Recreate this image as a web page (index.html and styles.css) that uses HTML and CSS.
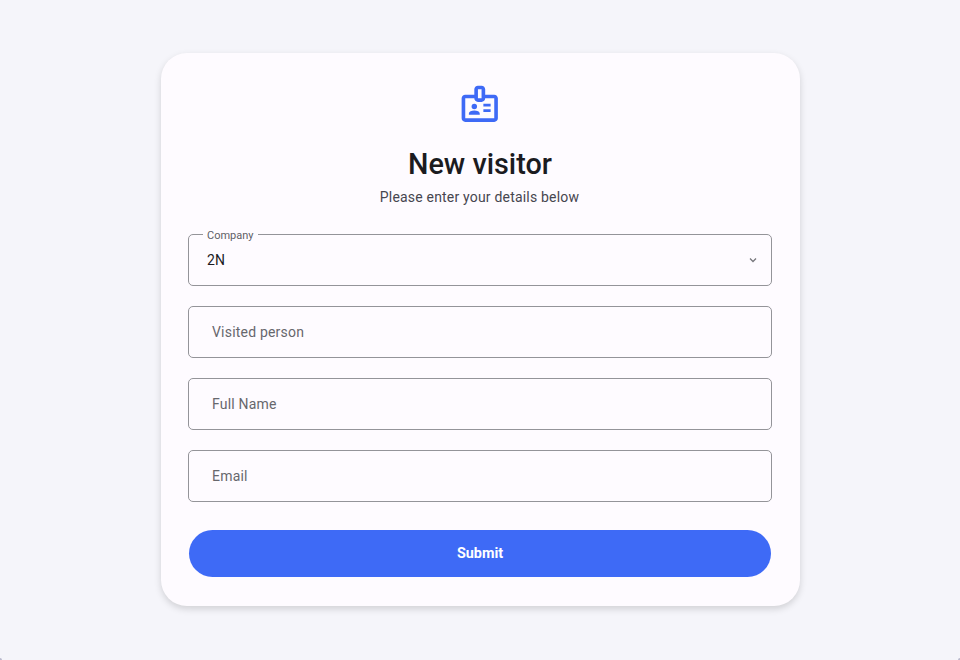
FILE: index.html
```html
<!DOCTYPE html>
<html lang="en">
<head>
<meta charset="utf-8">
<title>New visitor</title>
<link rel="stylesheet" href="styles.css">
</head>
<body>
<main class="card">
  <svg class="badge-icon" viewBox="0 0 24 24" aria-hidden="true"><path fill="currentColor" d="M20 7h-5V4c0-1.100-.9-2-2-2h-2c-1.100 0-2 .9-2 2v3H4c-1.100 0-2 .9-2 2v11c0 1.100.9 2 2 2h16c1.100 0 2-.9 2-2V9c0-1.100-.9-2-2-2zM11 4h2v5h-2V4zm9 16H4V9h5c0 1.100.9 2 2 2h2c1.100 0 2-.9 2-2h5v11z"/><circle fill="currentColor" cx="9" cy="13.500" r="1.500"/><path fill="currentColor" d="M11.080 16.180C10.440 15.900 9.740 15.750 9 15.750s-1.440.15-2.080.43c-.56.24-.92.78-.92 1.390V18h6v-.43c0-.61-.36-1.150-.92-1.390zM14 15h4v1.500h-4zM14 12h4v1.500h-4z"/></svg>
  <h1 class="title">New visitor</h1>
  <p class="subtitle">Please enter your details below</p>
  <form class="form">
    <div class="field field-select">
      <span class="label">Company</span>
      <span class="value">2N</span>
      <svg class="chevron" viewBox="0 0 10 10" aria-hidden="true"><path d="M2 3.500l3 3 3-3" fill="none" stroke="currentColor" stroke-width="1.300"/></svg>
    </div>
    <div class="field"><span class="placeholder">Visited person</span></div>
    <div class="field"><span class="placeholder">Full Name</span></div>
    <div class="field"><span class="placeholder">Email</span></div>
    <button class="submit" type="button">Submit</button>
  </form>
</main>
<span class="corner corner-left"></span>
<span class="corner corner-right"></span>
</body>
</html>
```

FILE: styles.css
```css
* { box-sizing: border-box; }
body {
  position: relative;
  margin: 0;
  height: 660px;
  padding-top: 53px;
  background: #f5f5fa;
  font-family: Roboto, sans-serif;
  color: #1b1b1f;
}
.card {
  width: 639px;
  height: 553px;
  margin: 0 0 0 161px;
  padding: 29px 29px 0 27px;
  border-radius: 26px;
  background: #fefbff;
  box-shadow: 0 3px 7px rgba(0, 0, 0, .15);
  display: flex;
  flex-direction: column;
  align-items: center;
}
.badge-icon { width: 43.500px; height: 43.500px; color: #3e6af6; }
.title {
  margin: 20.500px 0 0;
  font-size: 28.800px;
  line-height: 36px;
  font-weight: 500;
  transform: translateX(.5px);
}
.subtitle {
  margin: 5px 0 0;
  font-size: 14px;
  line-height: 21px;
  letter-spacing: .19px;
  color: #46464f;
}
.form {
  width: 584px;
  margin-top: 26px;
  align-self: flex-start;
  display: flex;
  flex-direction: column;
  gap: 20px;
}
.field {
  position: relative;
  height: 52px;
  padding: 0 23px;
  border: 1px solid #949499;
  border-radius: 5px;
  display: flex;
  align-items: center;
  font-size: 14px;
  letter-spacing: .2px;
}
.field-select { padding: 0 13px 0 18px; justify-content: space-between; }
.label {
  position: absolute;
  left: 14px;
  top: -7px;
  padding: 1px 4px 0;
  background: #fefbff;
  color: #5e5e66;
  font-size: 11px;
  line-height: 14px;
  letter-spacing: 0;
}
.chevron { width: 10px; height: 10px; color: #77777c; }
.placeholder { color: #67676d; }
.submit {
  height: 47px;
  margin: 8px 1px 0;
  border: 0;
  border-radius: 24px;
  background: #3e6af6;
  color: #fff;
  font: 700 14.400px Roboto, sans-serif;
}
.corner {
  position: absolute;
  bottom: 0;
  width: 2px;
  height: 2px;
  background: #b9b9cc;
}
.corner-left { left: 0; border-top-right-radius: 2px; }
.corner-right { right: 0; border-top-left-radius: 2px; }
```
